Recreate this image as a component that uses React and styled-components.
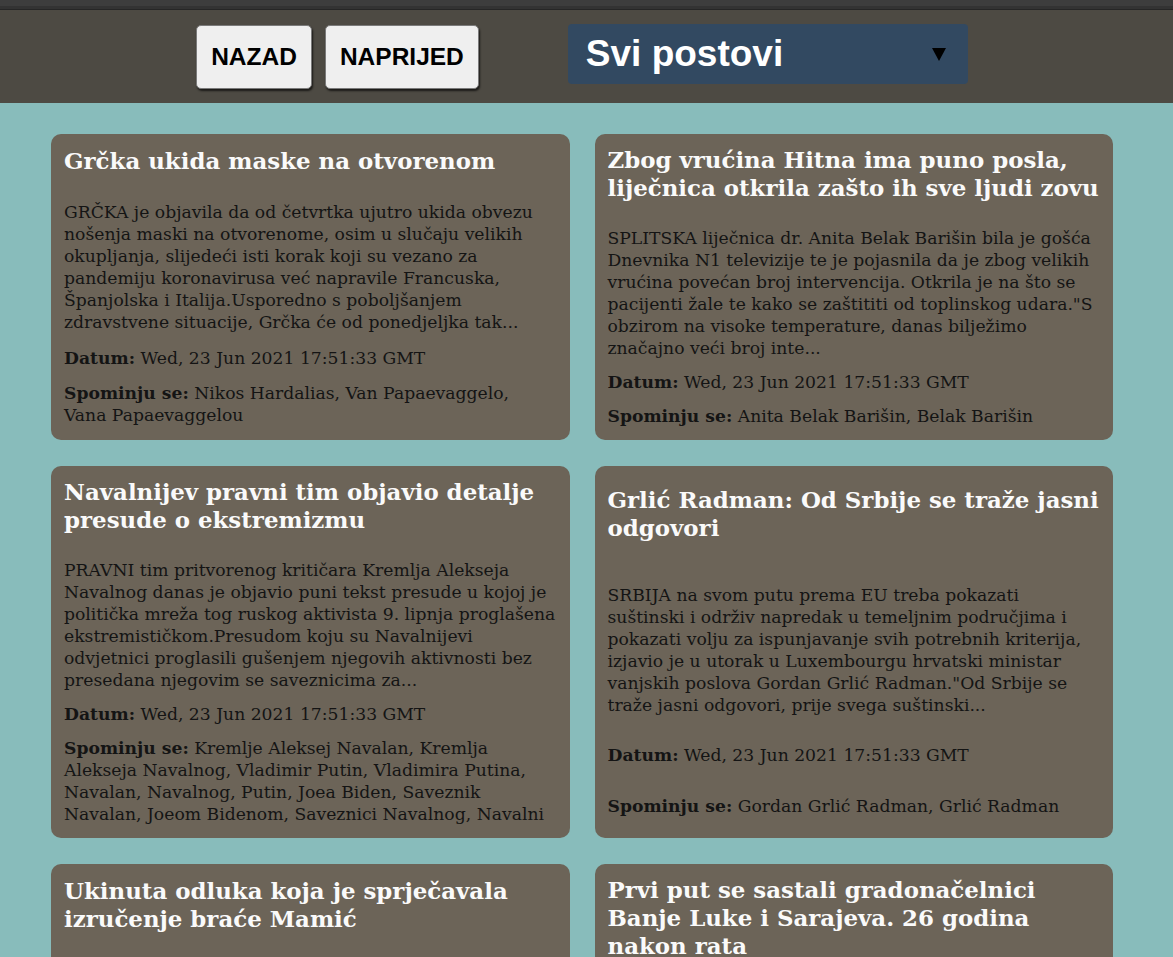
import React from "react";
import styled, { createGlobalStyle } from "styled-components";

const GlobalStyle = createGlobalStyle`
  html, body {
    margin: 0;
    padding: 0;
    background: #88bcbb;
  }
  body {
    font-family: "DejaVu Serif", Georgia, serif;
  }
`;

const Page = styled.div`
  min-height: 957px;
  background: #88bcbb;
`;

const TopStrip = styled.div`
  height: 10px;
  background: linear-gradient(#3d3d3d 0 6px, #333333 6px 9px, #262626 9px 10px);
`;

const Header = styled.header`
  height: 93px;
  box-sizing: border-box;
  background: #4d4a43;
  display: flex;
  justify-content: center;
  align-items: flex-start;
  padding: 14px 60px 0 51px;
`;

const NavGroup = styled.div`
  display: flex;
  gap: 13px;
  margin-top: 1px;
  margin-right: 89px;
`;

const NavButton = styled.button`
  font-family: "Liberation Sans", Arial, sans-serif;
  font-weight: 700;
  font-size: 24.5px;
  line-height: 28px;
  color: #000;
  background: #efefef;
  border: 1px solid #7a7a7a;
  border-radius: 5px;
  padding: 17px 14px;
  box-shadow: 1px 2px 2px rgba(0, 0, 0, 0.65);
  cursor: pointer;
`;

const Dropdown = styled.div`
  width: 400px;
  height: 60px;
  box-sizing: border-box;
  background: #324961;
  border-radius: 4px;
  display: flex;
  align-items: center;
  justify-content: space-between;
  padding: 0 22px 0 18px;
  cursor: pointer;
`;

const DropdownLabel = styled.span`
  font-family: "Liberation Sans", Arial, sans-serif;
  font-weight: 700;
  font-size: 37px;
  color: #ffffff;
  margin-top: -1px;
`;

const Caret = styled.span`
  width: 0;
  height: 0;
  border-left: 7px solid transparent;
  border-right: 7px solid transparent;
  border-top: 13px solid #000;
`;

const Grid = styled.main`
  display: grid;
  grid-template-columns: 1fr 1fr;
  gap: 26px 25px;
  padding: 31px 60px 40px 51px;
`;

const Card = styled.article`
  background: #6c6458;
  border-radius: 10px;
  padding: 12px 13px 13px;
  display: flex;
  flex-direction: column;
  justify-content: space-around;
  color: #141414;
`;

const Title = styled.h2`
  margin: 0 0 25px;
  font-family: "DejaVu Serif", Georgia, serif;
  font-weight: 700;
  font-size: 22.9px;
  line-height: 28px;
  color: #fafafa;
`;

const Text = styled.p`
  margin: 0 0 12px;
  font-size: 17.2px;
  line-height: 22px;
  &:last-child {
    margin-bottom: 0;
  }
`;

const Label = styled.b`
  font-weight: 700;
`;

const posts = [
  {
    title: "Grčka ukida maske na otvorenom",
    body:
      "GRČKA je objavila da od četvrtka ujutro ukida obvezu nošenja maski na otvorenome, osim u slučaju velikih okupljanja, slijedeći isti korak koji su vezano za pandemiju koronavirusa već napravile Francuska, Španjolska i Italija.Usporedno s poboljšanjem zdravstvene situacije, Grčka će od ponedjeljka tak...",
    date: "Wed, 23 Jun 2021 17:51:33 GMT",
    mentions: "Nikos Hardalias, Van Papaevaggelo, Vana Papaevaggelou",
  },
  {
    title: "Zbog vrućina Hitna ima puno posla, liječnica otkrila zašto ih sve ljudi zovu",
    body:
      "SPLITSKA liječnica dr. Anita Belak Barišin bila je gošća Dnevnika N1 televizije te je pojasnila da je zbog velikih vrućina povećan broj intervencija. Otkrila je na što se pacijenti žale te kako se zaštititi od toplinskog udara.\"S obzirom na visoke temperature, danas bilježimo značajno veći broj inte...",
    date: "Wed, 23 Jun 2021 17:51:33 GMT",
    mentions: "Anita Belak Barišin, Belak Barišin",
  },
  {
    title: "Navalnijev pravni tim objavio detalje presude o ekstremizmu",
    body:
      "PRAVNI tim pritvorenog kritičara Kremlja Alekseja Navalnog danas je objavio puni tekst presude u kojoj je politička mreža tog ruskog aktivista 9. lipnja proglašena ekstremističkom.Presudom koju su Navalnijevi odvjetnici proglasili gušenjem njegovih aktivnosti bez presedana njegovim se saveznicima za...",
    date: "Wed, 23 Jun 2021 17:51:33 GMT",
    mentions:
      "Kremlje Aleksej Navalan, Kremlja Alekseja Navalnog, Vladimir Putin, Vladimira Putina, Navalan, Navalnog, Putin, Joea Biden, Saveznik Navalan, Joeom Bidenom, Saveznici Navalnog, Navalni",
  },
  {
    title: "Grlić Radman: Od Srbije se traže jasni odgovori",
    body:
      "SRBIJA na svom putu prema EU treba pokazati suštinski i održiv napredak u temeljnim područjima i pokazati volju za ispunjavanje svih potrebnih kriterija, izjavio je u utorak u Luxembourgu hrvatski ministar vanjskih poslova Gordan Grlić Radman.\"Od Srbije se traže jasni odgovori, prije svega suštinski...",
    date: "Wed, 23 Jun 2021 17:51:33 GMT",
    mentions: "Gordan Grlić Radman, Grlić Radman",
  },
  {
    title: "Ukinuta odluka koja je sprječavala izručenje braće Mamić",
    body:
      "USTAVNI sud Bosne i Hercegovine ukinuo je odluku kojom je bilo spriječeno izručenje braće Mamić Hrvatskoj te je predmet vraćen na ponovno odlučivanje...",
    date: "Wed, 23 Jun 2021 17:51:33 GMT",
    mentions: "Zdravko Mamić, Zoran Mamić",
  },
  {
    title: "Prvi put se sastali gradonačelnici Banje Luke i Sarajeva. 26 godina nakon rata",
    body:
      "GRADONAČELNICI Banje Luke i Sarajeva sastali su se prvi put nakon rata i razgovarali o suradnji dvaju gradova...",
    date: "Wed, 23 Jun 2021 17:51:33 GMT",
    mentions: "Banja Luka, Sarajevo",
  },
];

function PostCard({ post }) {
  return (
    <Card>
      <Title>{post.title}</Title>
      <Text>{post.body}</Text>
      <Text>
        <Label>Datum:</Label> {post.date}
      </Text>
      <Text>
        <Label>Spominju se:</Label> {post.mentions}
      </Text>
    </Card>
  );
}

export default function App() {
  return (
    <Page>
      <GlobalStyle />
      <TopStrip />
      <Header>
        <NavGroup>
          <NavButton>NAZAD</NavButton>
          <NavButton>NAPRIJED</NavButton>
        </NavGroup>
        <Dropdown>
          <DropdownLabel>Svi postovi</DropdownLabel>
          <Caret />
        </Dropdown>
      </Header>
      <Grid>
        {posts.map((p) => (
          <PostCard key={p.title} post={p} />
        ))}
      </Grid>
    </Page>
  );
}
